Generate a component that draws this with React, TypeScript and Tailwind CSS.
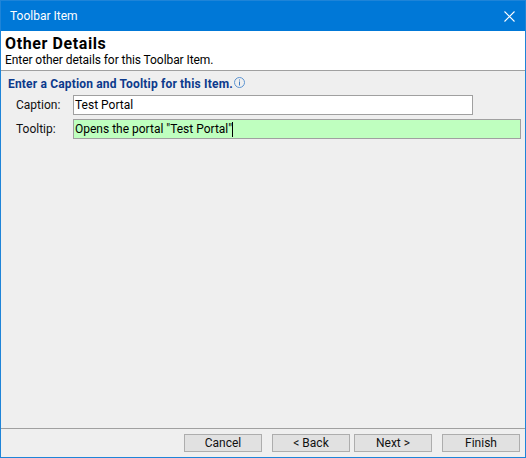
import React from 'react';

const font = "font-['Roboto','Noto_Sans',sans-serif]";

const WizardButton = ({ label, className = '' }: { label: string; className?: string }) => (
  <button
    type="button"
    className={`w-[78px] h-[18px] bg-[#e1e1e1] border border-[#adadad] text-[12px] leading-[16px] text-[#111] text-center ${className}`}
  >
    {label}
  </button>
);

const App: React.FC = () => {
  return (
    <div className={`w-[526px] h-[458px] flex flex-col bg-[#efefef] border border-[#1e84d8] ${font} overflow-hidden`}>
      {/* Title bar */}
      <div className="h-[30px] shrink-0 bg-[#0078d7] flex items-center justify-between pl-[9px] pr-[10px] text-white">
        <span className="text-[12px]">Toolbar Item</span>
        <svg width="11" height="11" viewBox="0 0 11 11" fill="none" stroke="white" strokeWidth="1.1">
          <path d="M0.5 0.5L10.5 10.5M10.5 0.5L0.5 10.5" />
        </svg>
      </div>

      {/* Header */}
      <div className="h-[40px] shrink-0 bg-white border-b border-[#a0a0a0] pl-[4px] text-black">
        <div className="text-[16px] leading-[19px] font-bold pt-[3px] box-content tracking-[0.6px]">Other Details</div>
        <div className="text-[12px] leading-[15px] tracking-[-0.07px]">Enter other details for this Toolbar Item.</div>
      </div>

      {/* Form */}
      <div className="flex-1 pt-[4px] pl-[7px] pr-[4px]">
        <div className="flex items-center gap-[1px] h-[17px]">
          <span className="text-[12px] font-bold text-[#0c3a8c] tracking-[0.17px]">Enter a Caption and Tooltip for this Item.</span>
          <svg width="11" height="11" viewBox="0 0 11 11" className="mb-[3px]" fill="none">
            <circle cx="5.5" cy="5.5" r="5" stroke="#5b93d0" />
            <rect x="5" y="4.5" width="1" height="4" fill="#3d7cc4" />
            <rect x="5" y="2.5" width="1" height="1" fill="#3d7cc4" />
          </svg>
        </div>
        <div className="mt-[3px] flex items-center h-[20px]">
          <label className="w-[65px] pl-[8px] text-[12px] text-[#111]">Caption:</label>
          <div className="w-[400px] h-[20px] bg-white border border-[#a0a0a0] pl-[1px] text-[12px] leading-[18px] text-black">Test Portal</div>
        </div>
        <div className="mt-[4px] flex items-center h-[20px]">
          <label className="w-[65px] pl-[8px] text-[12px] text-[#111]">Tooltip:</label>
          <div className="w-[448px] h-[20px] bg-[#bfffbf] border border-[#a0a0a0] pl-[1px] text-[12px] leading-[18px] text-black flex items-center">
            Opens the portal "Test Portal"
            <span className="w-px h-[15px] bg-black" />
          </div>
        </div>
      </div>

      {/* Footer */}
      <div className="h-[29px] shrink-0 border-t border-[#a0a0a0] flex items-start justify-end pt-[5px] pr-[5px]">
        <WizardButton label="Cancel" />
        <WizardButton label="< Back" className="ml-[10px]" />
        <WizardButton label="Next >" className="ml-[4px]" />
        <WizardButton label="Finish" className="ml-[10px]" />
      </div>
    </div>
  );
};

export default App;
